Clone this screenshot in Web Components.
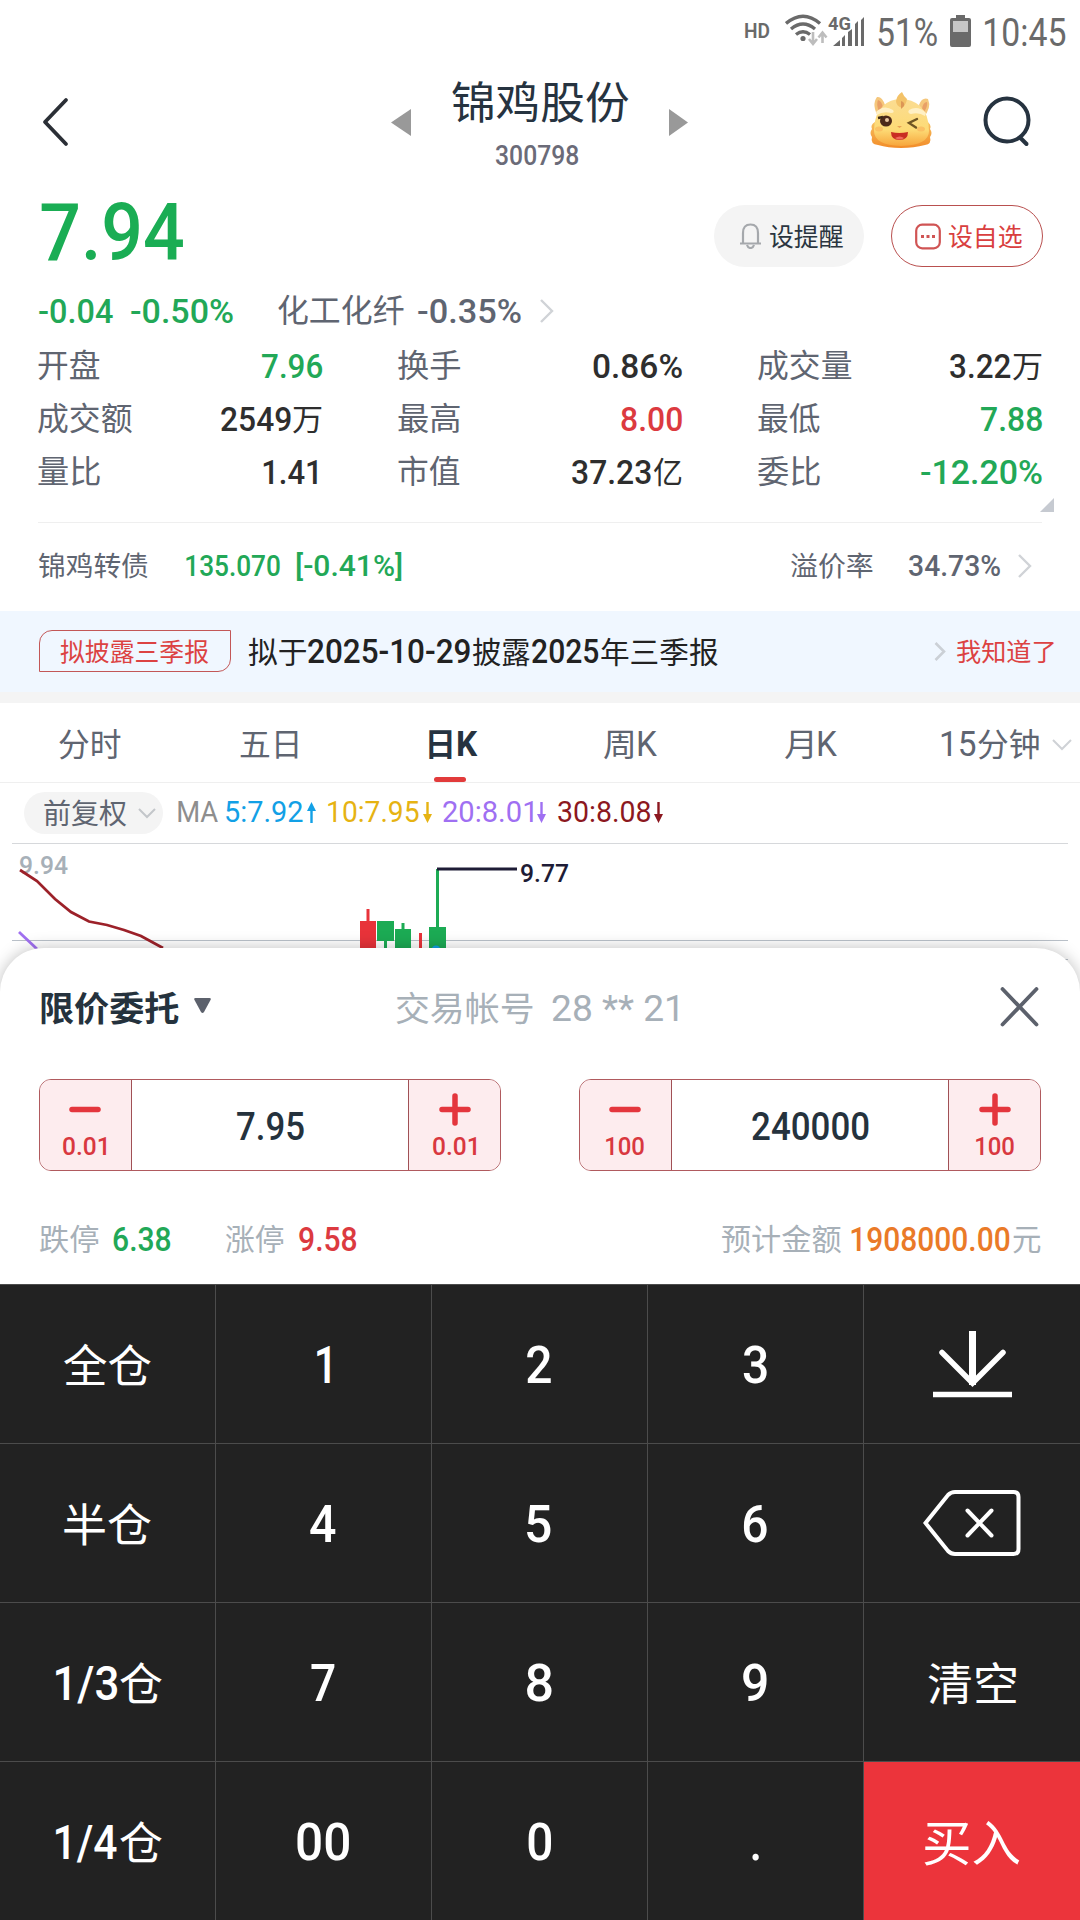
<!DOCTYPE html>
<html lang="zh-CN">
<head>
<meta charset="utf-8">
<title>锦鸡股份 300798</title>
<style>
    html, body {
        margin: 0;
        padding: 0;
        background: #fff;
    }

    body {
        width: 1080px;
        height: 1920px;
        overflow: hidden;
        font-family: Roboto, "Noto Sans CJK SC", sans-serif;
    }
</style>
</head>
<body>
<trade-page></trade-page>

<script>
const ctx = document.createElement('canvas').getContext('2d');

// text squeezed or stretched so that its ink is exactly "w" pixels wide
class FitText extends HTMLElement {

    constructor() {
        super();
        this.attachShadow({ mode: 'open' });
        this.shadowRoot.innerHTML = `
        <style>
            :host {
                display: block;
                flex: none;
                height: 1em;
                line-height: 1;
            }

            span {
                display: block;
                width: max-content;
                white-space: pre;
                transform-origin: 0 0;
            }
        </style>
        <span><slot></slot></span>`;
    }

    connectedCallback() {
        const w = Number(this.getAttribute('w'));
        const style = getComputedStyle(this);
        ctx.font = `${style.fontWeight} ${style.fontSize} ${style.fontFamily}`;
        const m = ctx.measureText(this.textContent);
        const scale = w / (m.actualBoundingBoxLeft + m.actualBoundingBoxRight);
        // hanzi sit a little higher than digits on the same baseline
        const dy = /[\u4e00-\u9fff]/.test(this.textContent) ? '.04em' : '.014em';
        this.style.width = w + 'px';
        this.shadowRoot.querySelector('span').style.transform =
            `translate(${m.actualBoundingBoxLeft * scale}px, ${dy}) scaleX(${scale})`;
    }
}

class BaseElement extends HTMLElement {

    constructor() {
        super();
        this.attachShadow({ mode: 'open' });
    }

    connectedCallback() {
        this.shadowRoot.innerHTML = this.template();
    }
}

class StatusBar extends BaseElement {
    template() {
        return `
        <style>
            :host {
                display: flex;
                align-items: center;
                justify-content: flex-end;
                height: 64px;
                padding-right: 14px;
                color: #6a6a6a;
                font-size: 38.5px;
            }
            .hd { font-size: 20px; font-weight: 600; margin: -3px 15px 0 0; }
            .net { margin-right: 13px; }
            .bat { margin: -2px 14px 0 13px; }
            svg { display: block; flex: none; }
        </style>
        <fit-text class="hd" w="25">HD</fit-text>
        <svg class="net" width="80" height="64" viewBox="785 0 80 64">
            <g fill="none" stroke="#6a6a6a" stroke-width="3.4">
                <path d="M786 23.5Q803 9 820 23.5"/>
                <path d="M791 29Q803 19 815 29"/>
                <path d="M796 34.500Q803 29 810 34.500"/>
            </g>
            <circle cx="803" cy="38.500" r="2.600" fill="#6a6a6a"/>
            <path d="M813 32v11M809 39l4 5 4-5M822.500 43V33M818.500 37.500l4-5 4 5" fill="none" stroke="#bdbdbd" stroke-width="2.600"/>
            <text x="828" y="29.500" font-size="17.500" font-weight="700" fill="#6a6a6a" textLength="23" lengthAdjust="spacingAndGlyphs">4G</text>
            <path d="M833 46l7-6v6zM842 38l3-3v11h-3zM848 32l4-3v17h-4zM855 24l3-3v25h-3zM861 20l3-3v29h-3z" fill="#6a6a6a"/>
        </svg>
        <fit-text w="59">51%</fit-text>
        <svg class="bat" width="21" height="32" viewBox="0 0 21 32">
            <path d="M6 0h9v3h4q2 0 2 2v25q0 2-2 2H2q-2 0-2-2V5q0-2 2-2h4z" fill="#6a6a6a"/>
            <path d="M3 6h15v11H3z" fill="#c6c6c6"/>
        </svg>
        <fit-text w="81">10:45</fit-text>`;
    }
}

class StockHeader extends BaseElement {
    template() {
        return `
        <style>
            :host {
                display: flex;
                align-items: center;
                height: 116px;
                padding: 0 45px 10px 41px;
            }
            svg { display: block; flex: none; }
            .prev { margin: 0 0 0 321px; }
            .name {
                display: flex;
                flex-direction: column;
                align-items: center;
                gap: 19px;
                margin: 6px 41px 0;
                width: 176px;
                color: #263340;
            }
            .title { font-size: 44.5px; }
            .code { font-size: 27px; font-weight: 500; color: #6b6b78; margin-right: 6px; }
            .mascot { margin: -2px 50px 0 181px; }
        </style>
        <svg width="29" height="52" viewBox="0 0 29 52">
            <path d="M25 4L4 26 25 48" fill="none" stroke="#2b2f36" stroke-width="3.800" stroke-linecap="round" stroke-linejoin="round"/>
        </svg>
        <svg class="prev" width="20" height="27" viewBox="0 0 20 27"><path d="M20 0v27L0 13.500z" fill="#999"/></svg>
        <div class="name">
            <fit-text class="title" w="177">锦鸡股份</fit-text>
            <fit-text class="code" w="82">300798</fit-text>
        </div>
        <svg width="19" height="27" viewBox="0 0 19 27"><path d="M0 0v27l19-13.500z" fill="#999"/></svg>
        <svg class="mascot" width="64" height="60" viewBox="0 0 64 60">
            <defs>
                <linearGradient id="skin" x1="0" y1="0" x2="0" y2="1">
                    <stop offset="0" stop-color="#fbdc92"/>
                    <stop offset=".65" stop-color="#fddb76"/>
                    <stop offset="1" stop-color="#f7a63c"/>
                </linearGradient>
                <linearGradient id="mane" x1="0" y1="0" x2="0" y2="1">
                    <stop offset="0" stop-color="#f7c262"/>
                    <stop offset="1" stop-color="#f28c28"/>
                </linearGradient>
            </defs>
            <path d="M6 31q-5 3-3 7-3 4 0 8-2 7 6 8 10 3 23 3t24-3q7-1 5-8 3-4 0-8 2-5-4-8z" fill="url(#mane)"/>
            <path d="M10 27Q2 14 8 6q5-1 8 8M54 27q9-10 5-19-6-2-9 6" fill="#f5c77c"/>
            <path d="M10 21q-3-8-1-12 4 1 5 8M55 21q4-6 3-10-4 0-5 7" fill="#e9a067"/>
            <path d="M5 40Q5 23 14 15q7-7 18-7t19 7q9 8 9 25 0 14-28 15Q5 54 5 40z" fill="url(#skin)"/>
            <path d="M27 10q1-6 6-9 2 5 5 7-1 6-5 9-6-2-6-7z" fill="#f3c268"/>
            <path d="M32 10q4 1 3 5l-3 3z" fill="#dc9655"/>
            <path d="M7 21q8-8 17-2 2 3-2 3-8-2-14 2zM57 22q-8-8-17-3-2 3 2 4 8-2 14 2z" fill="#fff0c5"/>
            <ellipse cx="17" cy="30" rx="6" ry="5.500" fill="#4c2919"/>
            <circle cx="18" cy="29" r="2" fill="#e7c5a0"/>
            <path d="M9 27l5-1" stroke="#3d2817" stroke-width="2.500"/>
            <path d="M48 28l-8 4 7 4.500" fill="none" stroke="#6f5524" stroke-width="2.400" stroke-linecap="round"/>
            <path d="M28 35h5l-2.500 2z" fill="#e8a455"/>
            <path d="M22 41q8 2 17 0 0 8-8.500 8T22 41z" fill="#c92d22"/>
            <path d="M26 47q5-3 9 0-4 3-9 0z" fill="#f0695a"/>
            <ellipse cx="10" cy="38" rx="4" ry="2.500" fill="#f9b75d" opacity=".7"/>
            <ellipse cx="52" cy="38" rx="4" ry="2.500" fill="#f9b75d" opacity=".7"/>
        </svg>
        <svg width="48" height="52" viewBox="0 0 48 52">
            <circle cx="24" cy="24" r="21.500" fill="none" stroke="#263340" stroke-width="4"/>
            <path d="M37 41.500l6.500 6.500" stroke="#263340" stroke-width="4" stroke-linecap="round"/>
        </svg>`;
    }
}

class QuotePill extends BaseElement {
    template() {
        return `
        <style>
            :host {
                display: flex;
                align-items: center;
                box-sizing: border-box;
                width: 150px;
                height: 62px;
                padding-left: 25px;
                border-radius: 31px;
                background: #f4f4f4;
                color: #2a3540;
                font-size: 24.6px;
            }
            :host([outline]) {
                width: 152px;
                padding-left: 23px;
                background: #fff;
                border: 1px solid #b9504f;
                color: #d93f3f;
            }
            fit-text { margin: 3px 0 0 8px; }
        </style>
        <slot name="icon"></slot>
        <fit-text w="73">${this.getAttribute('text')}</fit-text>`;
    }
}

class QuoteStat extends BaseElement {
    template() {
        const unit = this.getAttribute('unit');
        return `
        <style>
            :host {
                display: flex;
                align-items: center;
                height: 53px;
                color: #2e2e2e;
                font-size: 34px;
                font-weight: 500;
            }
            .label { font-size: 31.5px; font-weight: 400; color: #5f6571; margin-right: auto; }
            .unit { font-size: 30px; font-weight: 400; margin-left: 2px; }
            :host([up]) .value { color: #dc3a40; }
            :host([down]) .value { color: #22a857; }
        </style>
        <fit-text class="label" w="${this.getAttribute('lw')}">${this.getAttribute('label')}</fit-text>
        <fit-text class="value" w="${this.getAttribute('vw')}">${this.getAttribute('value')}</fit-text>
        ${unit ? `<fit-text class="unit" w="29">${unit}</fit-text>` : ''}`;
    }
}

class QuotePanel extends BaseElement {
    template() {
        return `
        <style>
            :host { display: block; height: 333px; padding: 0 38px; }
            svg { display: block; flex: none; }
            .top, .change { display: flex; align-items: center; }
            .top { height: 92px; }
            .price { font-size: 79px; font-weight: 500; color: #1aad54; margin: -7px auto 0 3px; }
            .pills { display: flex; gap: 27px; margin-right: -1px; }
            .change { height: 57px; font-size: 34px; font-weight: 500; color: #22a857; }
            .sector { font-size: 31.5px; font-weight: 400; color: #5f6571; margin: 0 14px 0 45px; }
            .grey { color: #5f6571; margin-right: 18px; }
            .stats {
                position: relative;
                display: grid;
                grid-template-columns: 284px 284px 284px;
                justify-content: space-between;
                padding-bottom: 24px;
                border-bottom: 1px solid #efefef;
            }
            .corner { position: absolute; right: -12px; bottom: 10px; }
        </style>
        <div class="top">
            <fit-text class="price" w="142">7.94</fit-text>
            <div class="pills">
                <quote-pill text="设提醒">
                    <svg slot="icon" width="23" height="26" viewBox="0 0 23 26">
                        <path d="M4 20V10q0-8.500 7.500-8.500T19 10v10M1 20.500h21M8 22q1 3 3.500 3t3.500-3" fill="none" stroke="#a5a8ac" stroke-width="2.200"/>
                    </svg>
                </quote-pill>
                <quote-pill text="设自选" outline>
                    <svg slot="icon" width="26" height="27" viewBox="0 0 26 27">
                        <rect x="1.200" y="1.700" width="23.600" height="23.600" rx="6" fill="none" stroke="#d05454" stroke-width="2.200"/>
                        <path d="M6 12h3v3H6zM11.500 12h3v3h-3zM17 12h3v3h-3z" fill="#d05454"/>
                    </svg>
                </quote-pill>
            </div>
        </div>
        <div class="change">
            <fit-text w="74" style="margin-left:1px">-0.04</fit-text>
            <fit-text w="102" style="margin-left:18px">-0.50%</fit-text>
            <fit-text class="sector" w="126">化工化纤</fit-text>
            <fit-text class="grey" w="103">-0.35%</fit-text>
            <svg width="15" height="26" viewBox="0 0 15 26"><path d="M2 2l11 11L2 24" fill="none" stroke="#d0d3d7" stroke-width="2.400"/></svg>
        </div>
        <div class="stats">
            <quote-stat label="开盘" lw="62" value="7.96" vw="60" down></quote-stat>
            <quote-stat label="换手" lw="62" value="0.86%" vw="89"></quote-stat>
            <quote-stat label="成交量" lw="94" value="3.22" vw="61" unit="万"></quote-stat>
            <quote-stat label="成交额" lw="94" value="2549" vw="70" unit="万"></quote-stat>
            <quote-stat label="最高" lw="62" value="8.00" vw="61" up></quote-stat>
            <quote-stat label="最低" lw="62" value="7.88" vw="61" down></quote-stat>
            <quote-stat label="量比" lw="62" value="1.41" vw="54" style="padding-right:5px"></quote-stat>
            <quote-stat label="市值" lw="62" value="37.23" vw="79" unit="亿"></quote-stat>
            <quote-stat label="委比" lw="62" value="-12.20%" vw="121" down></quote-stat>
            <svg class="corner" width="14" height="14" viewBox="0 0 14 14"><path d="M14 0v14H0z" fill="#c6cad1"/></svg>
        </div>`;
    }
}

class BondRow extends BaseElement {
    template() {
        return `
        <style>
            :host {
                display: flex;
                align-items: center;
                box-sizing: border-box;
                height: 88px;
                padding: 0 48px 3px 38px;
                font-size: 30px;
                font-weight: 500;
                color: #5f6571;
            }
            .label { font-size: 27.8px; font-weight: 400; }
            .green { color: #22a857; }
            svg { display: block; margin-left: 17px; }
        </style>
        <fit-text class="label" w="110">锦鸡转债</fit-text>
        <fit-text class="green" w="94" style="margin-left:38px">135.070</fit-text>
        <fit-text class="green" w="106" style="margin:0 auto 0 16px">[-0.41%]</fit-text>
        <fit-text class="label" w="82" style="margin-right:36px">溢价率</fit-text>
        <fit-text w="91">34.73%</fit-text>
        <svg width="15" height="26" viewBox="0 0 15 26"><path d="M2 2l11 11L2 24" fill="none" stroke="#d0d3d7" stroke-width="2.400"/></svg>`;
    }
}

class NoticeBar extends BaseElement {
    template() {
        return `
        <style>
            :host {
                display: flex;
                align-items: center;
                height: 81px;
                padding: 0 26px 0 39px;
                background: #f0f7ff;
                border-bottom: 11px solid #f4f4f4;
                font-size: 29.5px;
                color: #222;
            }
            .tag {
                display: flex;
                align-items: center;
                justify-content: center;
                box-sizing: border-box;
                width: 192px;
                height: 42px;
                margin: -1px 17px 0 0;
                padding-right: 2px;
                border: 1px solid #c35757;
                border-radius: 13px 0 13px 0;
                font-size: 25px;
                color: #dc4242;
            }
            .tag fit-text { margin-top: 1px; }
            .msg { display: flex; align-items: center; gap: 2px; margin: 2px auto 0 0; }
            .num { font-size: 32.5px; font-weight: 500; }
            .ok { font-size: 24.6px; color: #dc4242; margin: 2px 0 0 11px; }
            svg { display: block; }
        </style>
        <div class="tag"><fit-text w="149">拟披露三季报</fit-text></div>
        <div class="msg">
            <fit-text w="58">拟于</fit-text>
            <fit-text class="num" w="162">2025-10-29</fit-text>
            <fit-text w="58">披露</fit-text>
            <fit-text class="num" w="67">2025</fit-text>
            <fit-text w="117">年三季报</fit-text>
        </div>
        <svg width="12" height="19" viewBox="0 0 12 19"><path d="M1.500 1l8.500 8.500L1.500 18" fill="none" stroke="#cbd0d6" stroke-width="2.600"/></svg>
        <fit-text class="ok" w="97">我知道了</fit-text>`;
    }
}

class PeriodTabs extends BaseElement {
    template() {
        return `
        <style>
            :host {
                display: grid;
                grid-template-columns: repeat(6, 180px);
                height: 79px;
                border-bottom: 1px solid #efefef;
                font-size: 31.5px;
                color: #5f6571;
            }
            div {
                position: relative;
                display: flex;
                align-items: center;
                justify-content: center;
                gap: 2px;
                padding-top: 4px;
            }
            .lat { font-size: 35px; }
            .on { font-weight: 700; color: #263340; padding-left: 6px; }
            .on::after {
                content: "";
                position: absolute;
                left: 74px;
                bottom: 0;
                width: 32px;
                height: 5px;
                border-radius: 2.5px;
                background: #e23b3b;
            }
            svg { display: block; margin-left: 11px; }
        </style>
        <div><fit-text w="62">分时</fit-text></div>
        <div style="padding-right:2px"><fit-text w="58">五日</fit-text></div>
        <div class="on"><fit-text w="23">日</fit-text><fit-text class="lat" w="20" style="margin-left:4px">K</fit-text></div>
        <div><fit-text w="29">周</fit-text><fit-text class="lat" w="19" style="margin-left:3px">K</fit-text></div>
        <div><fit-text w="28">月</fit-text><fit-text class="lat" w="19" style="margin-left:4px">K</fit-text></div>
        <div style="padding-left:32px"><fit-text class="lat" w="35">15</fit-text><fit-text w="61">分钟</fit-text>
            <svg width="20" height="12" viewBox="0 0 20 12"><path d="M1 1l9 9 9-9" fill="none" stroke="#cfd2d6" stroke-width="2"/></svg>
        </div>`;
    }
}

class MaLegend extends BaseElement {
    arrow(up) {
        return `<svg width="9" height="21" viewBox="0 0 9 21"${up ? '' : ' style="transform:scaleY(-1)"'}>
            <path d="M4.500 0L9 9H5.700v12H3.300V9H0z" fill="currentColor"/></svg>`;
    }

    template() {
        return `
        <style>
            :host {
                display: flex;
                align-items: center;
                height: 60px;
                padding-left: 24px;
                font-size: 29.500px;
            }
            .adjust {
                display: flex;
                align-items: center;
                box-sizing: border-box;
                width: 139px;
                height: 42px;
                padding-left: 20px;
                margin-right: 15px;
                border-radius: 21px;
                background: #f4f4f4;
                color: #5f6571;
                font-size: 28px;
            }
            .adjust fit-text { margin-top: 1px; }
            .adjust svg { margin-left: 11px; }
            svg { display: block; flex: none; }
            .ma { color: #8e8e8e; margin: -1px 8px 0 0; }
            .line { display: flex; align-items: center; gap: 4px; margin: -1px 11.5px 0 0; }
        </style>
        <div class="adjust">
            <fit-text w="83">前复权</fit-text>
            <svg width="18" height="11" viewBox="0 0 18 11"><path d="M1 1l8 8 8-8" fill="none" stroke="#c3c6ca" stroke-width="2"/></svg>
        </div>
        <fit-text class="ma" w="40">MA</fit-text>
        <div class="line" style="color:#12a0e6"><fit-text w="77">5:7.92</fit-text>${this.arrow(true)}</div>
        <div class="line" style="color:#e6b312"><fit-text w="91">10:7.95</fit-text>${this.arrow()}</div>
        <div class="line" style="color:#9f70f2"><fit-text w="90">20:8.01</fit-text>${this.arrow()}</div>
        <div class="line" style="color:#8c1820"><fit-text w="92">30:8.08</fit-text>${this.arrow()}</div>`;
    }
}

class KlineChart extends BaseElement {
    template() {
        return `
        <style>
            :host { display: block; height: 105px; }
            svg { display: block; }
            text { font-size: 26.500px; }
        </style>
        <svg width="1080" height="150" viewBox="0 843 1080 150">
            <path d="M12 843.500h1056" stroke="#d6d8db"/>
            <path d="M12 940.500h1056M1060 959.500h8" stroke="#bac1c9"/>
            <text x="19" y="874" fill="#a7b0b8" font-weight="500" textLength="49" lengthAdjust="spacingAndGlyphs">9.94</text>
            <path d="M20 870l17 11 18 18 16 13 18 9.500 18 3.500 17 5 17 6 22 12" fill="none" stroke="#9c2129" stroke-width="2.800"/>
            <path d="M19 932l18 17" stroke="#a070f0" stroke-width="2.800"/>
            <path d="M360 921h16v30h-16zM366.500 909h3v12h-3zM419 933h3v18h-3z" fill="#e8333a"/>
            <path d="M377 921h17v20h-17zM384 941h3v10h-3zM395 929h16v22h-16zM401.500 923h3v6h-3zM429 927h17v24h-17zM436 869h3v58h-3z" fill="#1cab54"/>
            <circle cx="436" cy="950" r="4.500" fill="#12a0e6"/>
            <path d="M437 869h80" stroke="#1e1c36" stroke-width="3"/>
            <text x="520" y="882" fill="#1e1c36" font-weight="500" textLength="49" lengthAdjust="spacingAndGlyphs">9.77</text>
        </svg>`;
    }
}

class NumStepper extends BaseElement {
    template() {
        const step = this.getAttribute('step');
        const sw = this.getAttribute('sw');
        return `
        <style>
            :host {
                display: grid;
                grid-template-columns: 91px 1fr 91px;
                box-sizing: border-box;
                width: 462px;
                height: 92px;
                border: 1px solid #b05a5e;
                border-radius: 12px;
                overflow: hidden;
                font-weight: 500;
            }
            .btn {
                display: flex;
                flex-direction: column;
                align-items: center;
                padding-top: 13px;
                gap: 7px;
                background: #fdecee;
                color: #d9383f;
                font-size: 26.500px;
            }
            .btn:first-of-type { padding-right: 2px; }
            .value {
                display: flex;
                align-items: center;
                justify-content: center;
                padding-top: 2px;
                border: solid #a05055;
                border-width: 0 1px;
                font-size: 39px;
                color: #25323d;
            }
        </style>
        <div class="btn">
            <svg width="32" height="33" viewBox="0 0 32 33"><path d="M3 16.500h26" stroke="#e4363d" stroke-width="5.500" stroke-linecap="round"/></svg>
            <fit-text w="${sw}">${step}</fit-text>
        </div>
        <div class="value"><fit-text w="${this.getAttribute('vw')}">${this.getAttribute('value')}</fit-text></div>
        <div class="btn">
            <svg width="32" height="33" viewBox="0 0 32 33"><path d="M3 16.500h26M16 3v27" stroke="#e4363d" stroke-width="5.500" stroke-linecap="round"/></svg>
            <fit-text w="${sw}">${step}</fit-text>
        </div>`;
    }
}

class OrderSheet extends BaseElement {
    template() {
        return `
        <style>
            :host {
                display: block;
                position: relative;
                height: 336px;
                background: #fff;
                border-radius: 44px 44px 0 0;
                box-shadow: 0 0 16px rgba(0, 0, 0, .25);
            }
            svg { display: block; flex: none; }
            .head { display: flex; align-items: center; height: 120px; padding: 0 41px; }
            .type { font-size: 34.500px; font-weight: 700; color: #25323d; }
            .caret { margin: -5px 185px 0 15px; }
            .label { font-size: 34.500px; color: #a7b0b8; margin-right: 19px; }
            .account { font-size: 37.500px; color: #a7b0b8; margin-right: auto; }
            .close { margin-top: -3px; }
            .steppers { display: flex; justify-content: space-between; padding: 11px 39px 0; }
            .info {
                display: flex;
                align-items: center;
                height: 91px;
                padding: 23px 39px 0 40px;
                font-size: 29.500px;
                color: #a7b0b8;
            }
            .num { font-size: 33px; font-weight: 500; }
        </style>
        <div class="head">
            <fit-text class="type" w="138">限价委托</fit-text>
            <svg class="caret" width="17" height="15" viewBox="0 0 17 15"><path d="M1.500 0h14q2 0 1 2l-6.500 12q-1.500 2-3 0L.5 2q-1-2 1-2z" fill="#5c616c"/></svg>
            <fit-text class="label" w="137">交易帐号</fit-text>
            <fit-text class="account" w="126">28 ** 21</fit-text>
            <svg class="close" width="39" height="40" viewBox="0 0 39 40"><path d="M2.500 2l34 35.500M36.500 2l-34 35.500" stroke="#5c616c" stroke-width="3.800" stroke-linecap="round"/></svg>
        </div>
        <div class="steppers">
            <num-stepper step="0.01" sw="43" value="7.95" vw="67"></num-stepper>
            <num-stepper step="100" sw="38" value="240000" vw="117"></num-stepper>
        </div>
        <div class="info">
            <fit-text w="59">跌停</fit-text>
            <fit-text class="num" w="58" style="color:#22a857;margin:0 54px 0 14px">6.38</fit-text>
            <fit-text w="59">涨停</fit-text>
            <fit-text class="num" w="58" style="color:#dc3a40;margin:0 auto 0 15px">9.58</fit-text>
            <fit-text w="119">预计金额</fit-text>
            <fit-text class="num" w="159" style="color:#ea7a28;margin:0 3px 0 10px">1908000.00</fit-text>
            <fit-text w="28">元</fit-text>
        </div>`;
    }
}

class PadKey extends BaseElement {
    template() {
        return `
        <style>
            :host {
                display: flex;
                align-items: center;
                justify-content: center;
                box-sizing: border-box;
                gap: 3px;
                padding-top: 2px;
                background: #222;
                color: #fff;
                font-size: 45px;
            }
            :host([buy]) { background: #ec343b; font-size: 49px; }
            ::slotted(.digit) { font-size: 52px; font-weight: 500; }
            ::slotted(.part) { font-size: 48.500px; font-weight: 500; }
            ::slotted(svg) { display: block; margin-top: -2px; }
        </style>
        <slot></slot>`;
    }
}

class KeyPad extends BaseElement {
    digit(text, w) {
        return `<pad-key style="padding-right:1px"><fit-text class="digit" w="${w}">${text}</fit-text></pad-key>`;
    }

    template() {
        return `
        <style>
            :host {
                display: grid;
                grid-template-columns: 215px 215px 215px 215px 216px;
                grid-template-rows: repeat(4, 158px);
                gap: 1px;
                padding-top: 1px;
                height: 635px;
                background: #4c4c4c;
                position: relative;
            }
        </style>
        <pad-key><fit-text w="87">全仓</fit-text></pad-key>
        ${this.digit('1', 13)}${this.digit('2', 24)}${this.digit('3', 24)}
        <pad-key>
            <svg width="80" height="68" viewBox="0 0 80 68">
                <path d="M40.500 1v54" stroke="#fff" stroke-width="7"/>
                <path d="M10 22.500l30.500 30.500L71 22.500" fill="none" stroke="#fff" stroke-width="5.500" stroke-linecap="round"/>
                <path d="M1 64.500h79" stroke="#fff" stroke-width="5.500"/>
            </svg>
        </pad-key>
        <pad-key><fit-text w="87">半仓</fit-text></pad-key>
        ${this.digit('4', 26)}${this.digit('5', 24)}${this.digit('6', 24)}
        <pad-key>
            <svg width="98" height="68" viewBox="0 0 98 68">
                <path d="M2.500 34L25 6q3-3 7-3h58.500q5 0 5 5v52q0 5-5 5H32q-4 0-7-3z" fill="none" stroke="#fff" stroke-width="4"/>
                <path d="M44.500 21.500l24 25M68.500 21.500l-24 25" stroke="#fff" stroke-width="4" stroke-linecap="round"/>
            </svg>
        </pad-key>
        <pad-key style="padding-left:2px"><fit-text class="part" w="61">1/3</fit-text><fit-text w="42">仓</fit-text></pad-key>
        ${this.digit('7', 24)}${this.digit('8', 25)}${this.digit('9', 24)}
        <pad-key><fit-text w="88">清空</fit-text></pad-key>
        <pad-key style="padding-left:2px"><fit-text class="part" w="61">1/4</fit-text><fit-text w="42">仓</fit-text></pad-key>
        ${this.digit('00', 52)}${this.digit('0', 23)}${this.digit('.', 7)}
        <pad-key buy><fit-text w="96">买入</fit-text></pad-key>`;
    }
}

class TradePage extends BaseElement {
    template() {
        return `
        <style>
            :host { display: flex; flex-direction: column; width: 1080px; height: 1920px; overflow: hidden; }
            :host > * { flex: none; }
            status-bar, stock-header, quote-panel, bond-row, notice-bar,
            period-tabs, ma-legend, kline-chart, order-sheet, key-pad { flex: none; }
        </style>
        <status-bar></status-bar>
        <stock-header></stock-header>
        <quote-panel></quote-panel>
        <bond-row></bond-row>
        <notice-bar></notice-bar>
        <period-tabs></period-tabs>
        <ma-legend></ma-legend>
        <kline-chart></kline-chart>
        <order-sheet></order-sheet>
        <key-pad></key-pad>`;
    }
}

customElements.define('fit-text', FitText);
customElements.define('status-bar', StatusBar);
customElements.define('stock-header', StockHeader);
customElements.define('quote-pill', QuotePill);
customElements.define('quote-stat', QuoteStat);
customElements.define('quote-panel', QuotePanel);
customElements.define('bond-row', BondRow);
customElements.define('notice-bar', NoticeBar);
customElements.define('period-tabs', PeriodTabs);
customElements.define('ma-legend', MaLegend);
customElements.define('kline-chart', KlineChart);
customElements.define('num-stepper', NumStepper);
customElements.define('order-sheet', OrderSheet);
customElements.define('pad-key', PadKey);
customElements.define('key-pad', KeyPad);
customElements.define('trade-page', TradePage);
</script>
</body>
</html>
